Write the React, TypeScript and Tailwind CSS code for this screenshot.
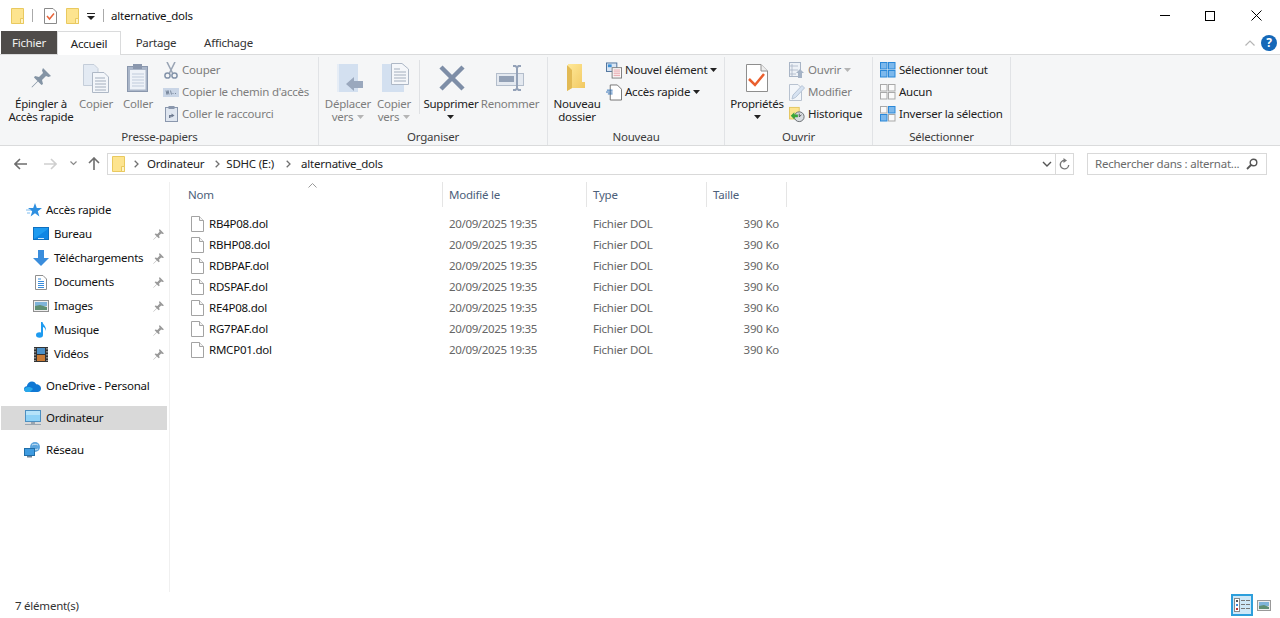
import React from "react";

const Folder = ({ className = "" }: { className?: string }) => (
  <svg width="13" height="16" viewBox="0 0 13 16" className={className}>
    <path d="M0.5 0.5H12.5V15.5H0.5Z" fill="#fde48f" stroke="#e9c95f" />
    <path d="M9.5 10.5H12.5V15.5H9.5Z" fill="#fff3c4" stroke="#e9c95f" />
  </svg>
);

const PropsSmall = () => (
  <svg width="13" height="16" viewBox="0 0 13 16">
    <path d="M0.5 0.5H9L12.5 4V15.5H0.5Z" fill="#fff" stroke="#8a8a8a" />
    <path d="M3 8L5.5 11L10 5.5" fill="none" stroke="#e8643a" strokeWidth="1.5" />
  </svg>
);

const Pin = ({ size = 12, fill = "#9a9a9a" }: { size?: number; fill?: string }) => (
  <svg width={size} height={size} viewBox="0 0 20 20">
    <path d="M12 0L20 8L17.5 9L15 8L11 12L12 16L10.5 17L7 13.5L1 19.5L0.5 19L6.5 13L3 9.5L4 8L8 9L12 5L11 2.5Z" fill={fill} />
  </svg>
);

const CopyIcon = () => (
  <svg width="26" height="29" viewBox="0 0 26 29">
    <path d="M0.5 0.5H11L15 4.5V21.5H0.5Z" fill="#e3eaf3" stroke="#c4cdd9" />
    <path d="M9.5 8.5H21L25.5 13V28.5H9.5Z" fill="#f3f6fa" stroke="#aeb8c6" />
    <path d="M12 14H22M12 17H23M12 20H23M12 23H23M12 26H23" stroke="#a3aebd" />
  </svg>
);

const PasteIcon = () => (
  <svg width="22" height="30" viewBox="0 0 22 30">
    <rect x="0.5" y="3.5" width="20" height="25" fill="#aab6c9" stroke="#8a97ad" />
    <rect x="3" y="7" width="15.5" height="19.5" fill="#eef2f8" />
    <path d="M5 11H17M5 14H17M5 17H17M5 20H17M5 23H17" stroke="#c0cbdb" />
    <rect x="6" y="1" width="9" height="5" fill="#8a97ad" />
  </svg>
);

const Scissors = () => (
  <svg width="14" height="17" viewBox="0 0 14 17">
    <path d="M3 0L8.5 11M11 0L5.5 11" stroke="#9aa5b5" strokeWidth="1.6" fill="none" />
    <circle cx="3.5" cy="13.5" r="2.6" fill="none" stroke="#8494aa" strokeWidth="1.5" />
    <circle cx="10.5" cy="13.5" r="2.6" fill="none" stroke="#8494aa" strokeWidth="1.5" />
  </svg>
);

const PathIcon = () => (
  <svg width="16" height="9" viewBox="0 0 16 9">
    <rect width="16" height="9" fill="#c9d5e6" />
    <path d="M3 2.5L4 6.5L5 2.5L6 6.5M7.5 2.5L8.5 6.5M9.5 5.5H10.5M12 5.5H13" stroke="#66758a" strokeWidth="0.8" fill="none" />
  </svg>
);

const ShortcutIcon = () => (
  <svg width="13" height="16" viewBox="0 0 13 16">
    <rect x="0.5" y="1.5" width="12" height="14" fill="#dfe6f0" stroke="#8a97ad" />
    <rect x="3.5" y="0" width="6" height="3" fill="#8a97ad" />
    <path d="M4 12V9H6.5V7.5L9.5 9.5L6.5 11.5V10.5H5.5V12Z" fill="#6d7a90" />
  </svg>
);

const MoveIcon = () => (
  <svg width="26" height="29" viewBox="0 0 26 29" className="ml-[3px]">
    <path d="M0 0H21V28H0Z" fill="#d3e0f0" />
    <path d="M0 0H2V28H0Z" fill="#e6edf6" />
    <path d="M9 20L17 13V17H26V24H17V27Z" fill="#9aa8bd" />
  </svg>
);

const CopyToIcon = () => (
  <svg width="27" height="30" viewBox="0 0 27 30" className="ml-[2px]">
    <path d="M0 1H22V29H0Z" fill="#d3e0f0" />
    <path d="M9.5 0.5H20L26.5 6V21.5H9.5Z" fill="#f5f7fa" stroke="#aeb8c6" />
    <path d="M12 6H18M12 9H24M12 12H24M12 15H24M12 18H24" stroke="#a3aebd" />
  </svg>
);

const DeleteIcon = () => (
  <svg width="26" height="26" viewBox="0 0 26 26" className="ml-[2px]">
    <path d="M2 2L24 24M24 2L2 24" stroke="#7e8ea7" strokeWidth="4.5" />
  </svg>
);

const RenameIcon = () => (
  <svg width="29" height="28" viewBox="0 0 29 28">
    <rect x="0.5" y="9.5" width="27" height="12" fill="#e4e9f0" stroke="#b3bdcb" />
    <rect x="3" y="12" width="15" height="6" fill="#93a1b6" />
    <path d="M17 2H19.5L21 3.5L22.5 2H25M21 3.5V24.5M17 26H19.5L21 24.5L22.5 26H25" stroke="#94a2b8" strokeWidth="2" fill="none" />
  </svg>
);

const NewFolderIcon = () => (
  <svg width="20" height="28" viewBox="0 0 20 28" className="mr-[2px]">
    <defs>
      <linearGradient id="nf" x1="0" y1="0" x2="1" y2="1">
        <stop offset="0" stopColor="#ffe999" />
        <stop offset="1" stopColor="#f0c65e" />
      </linearGradient>
    </defs>
    <path d="M2 0H16V18H19V24H6L1 27Z" fill="url(#nf)" />
    <path d="M1 1L6 6V24L1 27Z" fill="#e2ba55" />
  </svg>
);

const NewItemIcon = () => (
  <svg width="17" height="17" viewBox="0 0 17 17">
    <rect x="0.5" y="0.5" width="11" height="9" fill="#d9e6f4" stroke="#4a6f9a" />
    <rect x="2" y="2" width="4" height="3" fill="#3d8fd6" />
    <rect x="6.5" y="5.5" width="10" height="11" fill="#fff" stroke="#7a7a7a" />
    <path d="M8 8H15M8 10H15M8 12H15M8 14H15" stroke="#e29aa0" />
  </svg>
);

const QuickIcon = () => (
  <svg width="17" height="17" viewBox="0 0 17 17">
    <path d="M4.5 0.5H12L16.5 5V16.5H4.5Z" fill="#fff" stroke="#6f6f6f" />
    <path d="M1 6H7M0 8H7M2 10H7" stroke="#2c6db3" />
  </svg>
);

const PropsLarge = () => (
  <svg width="22" height="28" viewBox="0 0 22 28">
    <path d="M0.5 0.5H15L21.5 7V27.5H0.5Z" fill="#fff" stroke="#8e8e8e" />
    <path d="M15 0.5V7H21.5" fill="#eee" stroke="#8e8e8e" />
    <path d="M3 15L9 21L18 10" fill="none" stroke="#ea5f2e" strokeWidth="2.5" />
  </svg>
);

const OpenIcon = () => (
  <svg width="16" height="16" viewBox="0 0 16 16">
    <rect x="0.5" y="0.5" width="11" height="14" fill="#eef2f7" stroke="#a9b5c6" />
    <path d="M2 3H4V5H2ZM2 7H4V9H2ZM2 11H4V13H2ZM5 4H9M5 8H9M5 12H7" stroke="#a9b5c6" fill="none" strokeWidth="0.8" />
    <path d="M9 16V11H7L11 7L15 11H13V16Z" fill="#a5b3c6" />
  </svg>
);

const EditIcon = () => (
  <svg width="16" height="17" viewBox="0 0 16 17">
    <path d="M0.5 0.5H9L12.5 4V16.5H0.5Z" fill="#f3f6fa" stroke="#b8c2d0" />
    <path d="M3 15L4 11L13 1.5L15.5 4L6.5 13.5Z" fill="#d6e2f1" stroke="#b6c4d6" />
  </svg>
);

const HistoryIcon = () => (
  <svg width="18" height="17" viewBox="0 0 18 17">
    <rect x="0.5" y="0.5" width="11" height="13" fill="#fde48f" stroke="#e2c35a" />
    <circle cx="11.5" cy="11" r="5.5" fill="#d9dde2" stroke="#5f6468" />
    <path d="M11.5 7.5V11L14 9" stroke="#444" fill="none" />
    <path d="M2 10L6 6V8.5H10V11.5H6V14Z" fill="#3aa53a" />
  </svg>
);

const SelectGrid = ({ filled }: { filled: number[] }) => (
  <svg width="16" height="16" viewBox="0 0 16 16">
    {[0, 1, 2, 3].map((i) => {
      const x = i % 2 === 0 ? 0.5 : 8.5;
      const y = i < 2 ? 0.5 : 8.5;
      const on = filled.includes(i);
      return (
        <rect key={i} x={x} y={y} width="6.5" height="6.5" fill={on ? "#7cb8ec" : "#fafafa"} stroke={on ? "#2b88d8" : "#a9a9a9"} />
      );
    })}
  </svg>
);

const Caret = ({ color = "#222" }: { color?: string }) => (
  <svg width="7" height="4" viewBox="0 0 7 4" className="shrink-0">
    <path d="M0 0H7L3.5 4Z" fill={color} />
  </svg>
);

const FileIcon = () => (
  <svg width="13" height="16" viewBox="0 0 13 16">
    <path d="M0.5 0.5H8.5L12.5 4.5V15.5H0.5Z" fill="#fff" stroke="#a3a3a3" />
    <path d="M8.5 0.5V4.5H12.5" fill="#f3f3f3" stroke="#a3a3a3" />
  </svg>
);

const LargeBtn = ({
  icon,
  lines,
  className,
  disabled,
  caret,
}: {
  icon: React.ReactNode;
  lines: React.ReactNode[];
  className: string;
  disabled?: boolean;
  caret?: boolean;
}) => (
  <div className={`flex flex-col items-center ${className}`}>
    <div className="h-[38px] flex items-center justify-center shrink-0">{icon}</div>
    <div className={`flex flex-col items-center leading-[13px] whitespace-nowrap ${disabled ? "text-[#7d7d7d]" : "text-[#222]"}`}>
      {lines.map((l, i) => (
        <span key={i} className="h-[13px] flex items-center gap-[4px]">
          {l}
        </span>
      ))}
      {caret && (
        <span className="h-[13px] flex items-center">
          <Caret />
        </span>
      )}
    </div>
  </div>
);

const SmallBtn = ({
  icon,
  text,
  disabled,
  caret,
}: {
  icon: React.ReactNode;
  text: string;
  disabled?: boolean;
  caret?: string;
}) => (
  <div className="h-[22px] flex items-center">
    <div className="w-[16px] h-[17px] flex items-center justify-center shrink-0">{icon}</div>
    <span className={`ml-[3px] whitespace-nowrap ${disabled ? "text-[#7d7d7d]" : "text-[#222]"}`}>{text}</span>
    {caret && (
      <span className="ml-[3px] flex">
        <Caret color={caret} />
      </span>
    )}
  </div>
);

const Group = ({ className, label, children }: { className: string; label: string; children: React.ReactNode }) => (
  <div className={`flex flex-col shrink-0 h-full ${className}`}>
    <div className="flex h-[71px] mt-[4px]">{children}</div>
    <div className="flex-1 flex items-center justify-center text-[#3c3c3c]">{label}</div>
  </div>
);

const Sep = () => <div className="w-px bg-[#e1e3e6] h-[88px] mt-[2px] shrink-0" />;

const NavIcon = ({ kind }: { kind: string }) => {
  switch (kind) {
    case "star":
      return (
        <svg width="16" height="16" viewBox="0 0 16 16">
          <path d="M9 1L10.8 6H16L11.8 9.2L13.4 14.5L9 11.3L4.6 14.5L6.2 9.2L2 6H7.2Z" fill="#2e8fe0" />
          <path d="M0 8H5M1 11H4" stroke="#7dbcf0" />
        </svg>
      );
    case "desktop":
      return (
        <svg width="16" height="14" viewBox="0 0 16 14">
          <rect x="0.5" y="0.5" width="15" height="12" fill="#1e9bf0" stroke="#0e6fc0" />
          <path d="M1 12L15 2V12Z" fill="#0f86e4" />
          <rect x="5" y="11" width="6" height="1" fill="#cfe8fb" />
        </svg>
      );
    case "down":
      return (
        <svg width="16" height="16" viewBox="0 0 16 16">
          <path d="M5 0H11V8H16L8 16L0 8H5Z" fill="#3a8ddc" />
        </svg>
      );
    case "doc":
      return (
        <svg width="12" height="15" viewBox="0 0 12 15">
          <path d="M0.5 0.5H8L11.5 4V14.5H0.5Z" fill="#fff" stroke="#8f8f8f" />
          <path d="M3 4H6M3 6.5H9M3 8.5H9M3 10.5H9M3 12.5H9" stroke="#3a8ddc" />
        </svg>
      );
    case "image":
      return (
        <svg width="16" height="12" viewBox="0 0 16 12">
          <rect x="0.5" y="0.5" width="15" height="11" fill="#eee" stroke="#8f8f8f" />
          <rect x="2" y="2" width="12" height="4" fill="#7fb4d9" />
          <path d="M2 6L7 5L14 7V10H2Z" fill="#5f8f73" />
        </svg>
      );
    case "music":
      return (
        <svg width="11" height="16" viewBox="0 0 11 16">
          <ellipse cx="3.5" cy="13" rx="3.5" ry="2.8" fill="#1e9bf0" />
          <path d="M5 13V0H6.5C7 3 10.5 4 10 9C9 6 8 5 7 5V13Z" fill="#1e9bf0" />
        </svg>
      );
    case "video":
      return (
        <svg width="14" height="15" viewBox="0 0 14 15">
          <rect width="14" height="15" fill="#333" />
          <rect x="3" y="1" width="8" height="6" fill="#4b90c8" />
          <rect x="3" y="8" width="8" height="6" fill="#c97a34" />
          <path d="M1 1V14M13 1V14" stroke="#ddd" strokeDasharray="1.5 1.5" />
        </svg>
      );
    case "cloud":
      return (
        <svg width="17" height="11" viewBox="0 0 17 11">
          <path d="M3 11C1 11 0 9.5 0 8C0 6.5 1.3 5.3 2.8 5.3C3.4 2.5 5.5 0.5 8 0.5C10 0.5 11.5 1.7 12.2 3.3C14.8 3.3 17 5 17 7.5C17 9.5 15.5 11 13.5 11Z" fill="#0f78d4" />
          <path d="M3 11C1 11 0 9.5 0 8C2 6 6 5 9 8L6 11Z" fill="#28a8ea" />
        </svg>
      );
    case "pc":
      return (
        <svg width="16" height="16" viewBox="0 0 16 16">
          <rect x="0.5" y="0.5" width="15" height="11" fill="#8ed2f7" stroke="#4d8fc0" />
          <rect x="1" y="1" width="14" height="4" fill="#b5e3fa" />
          <rect x="6" y="12" width="4" height="2" fill="#9aa5b0" />
          <rect x="0" y="14" width="16" height="1" fill="#9aa5b0" />
        </svg>
      );
    default:
      return (
        <svg width="17" height="16" viewBox="0 0 17 16">
          <circle cx="11" cy="5" r="5" fill="#5da5dd" />
          <path d="M8 3C10 2 12 2 14 3M8 7C10 8 12 8 14 7" stroke="#cfe5f5" fill="none" />
          <rect x="0.5" y="6.5" width="10" height="7" fill="#3f9be0" stroke="#206ea8" />
          <rect x="3" y="14" width="5" height="1.5" fill="#6d8296" />
        </svg>
      );
  }
};

const quick = [
  ["desktop", "Bureau"],
  ["down", "Téléchargements"],
  ["doc", "Documents"],
  ["image", "Images"],
  ["music", "Musique"],
  ["video", "Vidéos"],
];

const files = ["RB4P08.dol", "RBHP08.dol", "RDBPAF.dol", "RDSPAF.dol", "RE4P08.dol", "RG7PAF.dol", "RMCP01.dol"];

const gridCols = "grid grid-cols-[262px_144px_120px_80px]";

const Chevron = () => (
  <svg width="5" height="8" viewBox="0 0 5 8" className="shrink-0">
    <path d="M0.7 0.7L4 4L0.7 7.3" fill="none" stroke="#707070" strokeWidth="1.3" />
  </svg>
);

export default function App() {
  return (
    <div
      className="w-[1280px] h-[618px] flex flex-col bg-white overflow-hidden text-[11.5px] text-[#1a1a1a] tracking-[-0.02em]"
      style={{ fontFamily: '"Noto Sans", sans-serif' }}
    >
      {/* Title bar */}
      <div className="h-[31px] flex items-center shrink-0 pl-[11px]">
        <Folder />
        <div className="w-px h-[13px] bg-[#aaa] ml-[8px]" />
        <span className="ml-[11px] flex"><PropsSmall /></span>
        <span className="ml-[9px] flex"><Folder /></span>
        <svg width="8" height="7" viewBox="0 0 8 7" className="ml-[8px] mt-[2px]">
          <path d="M0 0H8V1H0ZM0 3H8L4 7Z" fill="#222" />
        </svg>
        <div className="w-px h-[13px] bg-[#aaa] ml-[8px]" />
        <span className="ml-[7px] text-[#111]">alternative_dols</span>
        <div className="ml-auto flex items-center">
          <div className="w-[10px] h-px bg-black mr-[35px]" />
          <div className="w-[10px] h-[10px] border border-black mr-[36px]" />
          <svg width="11" height="11" viewBox="0 0 11 11" className="mr-[18px]">
            <path d="M0.5 0.5L10.5 10.5M10.5 0.5L0.5 10.5" stroke="#000" />
          </svg>
        </div>
      </div>

      {/* Tabs */}
      <div className="h-[24px] flex items-stretch shrink-0 pl-px border-b border-[#dadbdc]">
        <div className="w-[56px] h-[23px] bg-[#4f4c4a] text-[#f0f0f0] flex items-center justify-center">Fichier</div>
        <div className="w-[64px] h-[24px] bg-white border border-b-0 border-[#dadbdc] flex items-center justify-center text-[#222] relative z-10">Accueil</div>
        <div className="w-[70px] flex items-center justify-center text-[#333]">Partage</div>
        <div className="w-[75px] flex items-center justify-center text-[#333]">Affichage</div>
        <div className="ml-auto flex items-center mr-[3px]">
          <svg width="10" height="6" viewBox="0 0 10 6" className="mr-[6px]">
            <path d="M0.5 5.5L5 1L9.5 5.5" fill="none" stroke="#b5b5b5" strokeWidth="1.2" />
          </svg>
          <div className="w-[16px] h-[16px] rounded-full bg-[#1568b8] text-white flex items-center justify-center text-[12px] font-bold leading-none">?</div>
        </div>
      </div>

      {/* Ribbon */}
      <div className="h-[91px] bg-[#f5f6f7] border-b border-[#dadbdc] flex shrink-0 pl-px">
        <Group className="w-[317px]" label="Presse-papiers">
          <LargeBtn className="w-[80px]" icon={<Pin size={20} fill="#8494a5" />} lines={["Épingler à", "Accès rapide"]} />
          <LargeBtn className="w-[30px]" disabled icon={<CopyIcon />} lines={["Copier"]} />
          <LargeBtn className="w-[36px] ml-[9px]" disabled icon={<PasteIcon />} lines={["Coller"]} />
          <div className="ml-[7px] flex flex-col">
            <SmallBtn disabled icon={<Scissors />} text="Couper" />
            <SmallBtn disabled icon={<PathIcon />} text="Copier le chemin d'accès" />
            <SmallBtn disabled icon={<ShortcutIcon />} text="Coller le raccourci" />
          </div>
        </Group>
        <Sep />
        <Group className="w-[228px]" label="Organiser">
          <LargeBtn className="w-[50px] ml-[4px]" disabled icon={<MoveIcon />} lines={["Déplacer", <>vers <Caret color="#b5b5b5" /></>]} />
          <LargeBtn className="w-[42px]" disabled icon={<CopyToIcon />} lines={["Copier", <>vers <Caret color="#b5b5b5" /></>]} />
          <div className="ml-[4px] w-px h-[54px] mt-[1px] bg-[#dfe1e4]" />
          <LargeBtn className="w-[62px]" icon={<DeleteIcon />} lines={["Supprimer"]} caret />
          <LargeBtn className="w-[56px]" disabled icon={<RenameIcon />} lines={["Renommer"]} />
        </Group>
        <Sep />
        <Group className="w-[176px]" label="Nouveau">
          <LargeBtn className="w-[58px]" icon={<NewFolderIcon />} lines={["Nouveau", "dossier"]} />
          <div className="flex flex-col">
            <SmallBtn icon={<NewItemIcon />} text="Nouvel élément" caret="#222" />
            <SmallBtn icon={<QuickIcon />} text="Accès rapide" caret="#222" />
          </div>
        </Group>
        <Sep />
        <Group className="w-[147px]" label="Ouvrir">
          <LargeBtn className="w-[64px]" icon={<PropsLarge />} lines={["Propriétés"]} caret />
          <div className="flex flex-col">
            <SmallBtn disabled icon={<OpenIcon />} text="Ouvrir" caret="#b5b5b5" />
            <SmallBtn disabled icon={<EditIcon />} text="Modifier" />
            <SmallBtn icon={<HistoryIcon />} text="Historique" />
          </div>
        </Group>
        <Sep />
        <Group className="w-[137px]" label="Sélectionner">
          <div className="flex flex-col ml-[7px]">
            <SmallBtn icon={<SelectGrid filled={[0, 1, 2, 3]} />} text="Sélectionner tout" />
            <SmallBtn icon={<SelectGrid filled={[]} />} text="Aucun" />
            <SmallBtn icon={<SelectGrid filled={[1, 2]} />} text="Inverser la sélection" />
          </div>
        </Group>
        <Sep />
      </div>

      {/* Address bar */}
      <div className="h-[36px] flex items-center shrink-0 pl-[14px] pb-[1px]">
        <svg width="13" height="12" viewBox="0 0 13 12">
          <path d="M6 1L1 6L6 11M1 6H13" fill="none" stroke="#6e6e6e" strokeWidth="1.6" />
        </svg>
        <svg width="13" height="12" viewBox="0 0 13 12" className="ml-[17px]">
          <path d="M7 1L12 6L7 11M12 6H0" fill="none" stroke="#cfcfcf" strokeWidth="1.6" />
        </svg>
        <svg width="7" height="5" viewBox="0 0 7 5" className="ml-[13px]">
          <path d="M0.5 0.5L3.5 3.5L6.5 0.5" fill="none" stroke="#8a8a8a" strokeWidth="1.2" />
        </svg>
        <svg width="12" height="13" viewBox="0 0 12 13" className="ml-[11px]">
          <path d="M1 6L6 1L11 6M6 1V13" fill="none" stroke="#6e6e6e" strokeWidth="1.6" />
        </svg>
        <div className="ml-[7px] w-[967px] h-[22px] border border-[#d9d9d9] flex items-center pl-[4px]">
          <Folder />
          <span className="ml-[9px]"><Chevron /></span>
          <span className="ml-[8px] text-[#222]">Ordinateur</span>
          <span className="ml-[11px]"><Chevron /></span>
          <span className="ml-[6px] text-[#222]">SDHC (E:)</span>
          <span className="ml-[12px]"><Chevron /></span>
          <span className="ml-[10px] text-[#222]">alternative_dols</span>
          <div className="ml-auto flex items-center h-full">
            <svg width="10" height="6" viewBox="0 0 10 6" className="mr-[2px]">
              <path d="M1 1L5 5L9 1" fill="none" stroke="#555" strokeWidth="1.4" />
            </svg>
            <div className="w-px h-full bg-[#d9d9d9] ml-[1px]" />
            <div className="w-[17px] flex justify-center">
              <svg width="11" height="12" viewBox="0 0 11 12">
                <path d="M5.5 2.5A4.2 4.2 0 1 0 9.7 7" fill="none" stroke="#777" strokeWidth="1.4" />
                <path d="M4.5 0L8 2.5L4.5 5Z" fill="#777" />
              </svg>
            </div>
          </div>
        </div>
        <div className="ml-[13px] w-[180px] h-[22px] border border-[#d9d9d9] flex items-center pl-[7px] text-[#6a6a6a]">
          <span className="whitespace-nowrap">Rechercher dans : alternat...</span>
          <svg width="12" height="12" viewBox="0 0 12 12" className="ml-auto mr-[8px]">
            <circle cx="7.5" cy="4.5" r="3.3" fill="none" stroke="#555" strokeWidth="1.4" />
            <path d="M5 7L1 11" stroke="#555" strokeWidth="1.8" />
          </svg>
        </div>
      </div>

      {/* Main */}
      <div className="flex-1 flex min-h-0">
        <div className="w-[170px] shrink-0 border-r border-[#f0f0f0] pt-[16px] pl-px">
          <div className="h-[24px] flex items-center pl-[25px] text-[#111]">
            <span className="w-[16px] flex justify-center"><NavIcon kind="star" /></span>
            <span className="ml-[4px]">Accès rapide</span>
          </div>
          {quick.map(([k, t]) => (
            <div key={t} className="h-[24px] flex items-center pl-[32px] pr-[3px] text-[#111]">
              <span className="w-[16px] h-[16px] flex items-center justify-center"><NavIcon kind={k} /></span>
              <span className="ml-[5px]">{t}</span>
              <span className="ml-auto flex mr-[2px]"><Pin size={11} /></span>
            </div>
          ))}
          <div className="h-[24px] mt-[8px] flex items-center pl-[23px] text-[#111]">
            <span className="w-[17px] flex justify-center"><NavIcon kind="cloud" /></span>
            <span className="ml-[5px]">OneDrive - Personal</span>
          </div>
          <div className="h-[24px] mt-[8px] w-[166px] bg-[#d9d9d9] flex items-center pl-[23px] text-[#111]">
            <span className="w-[17px] flex justify-center"><NavIcon kind="pc" /></span>
            <span className="ml-[5px]">Ordinateur</span>
          </div>
          <div className="h-[24px] mt-[8px] flex items-center pl-[23px] text-[#111]">
            <span className="w-[17px] flex justify-center"><NavIcon kind="net" /></span>
            <span className="ml-[5px]">Réseau</span>
          </div>
        </div>
        <div className="flex-1 pl-[11px] relative">
          <svg width="9" height="5" viewBox="0 0 9 5" className="absolute left-[138px] top-[1px]">
            <path d="M0.5 4.5L4.5 0.5L8.5 4.5" fill="none" stroke="#9a9a9a" />
          </svg>
          <div className={`${gridCols} h-[25px] text-[#4c607a]`}>
            <div className="border-r border-[#e5e5e5] pl-[7px] flex items-center">Nom</div>
            <div className="border-r border-[#e5e5e5] pl-[6px] flex items-center">Modifié le</div>
            <div className="border-r border-[#e5e5e5] pl-[6px] flex items-center">Type</div>
            <div className="border-r border-[#e5e5e5] pl-[6px] flex items-center">Taille</div>
          </div>
          <div className="pt-[6px]">
            {files.map((f) => (
              <div key={f} className={`${gridCols} h-[21px] items-center text-[#666]`}>
                <div className="flex items-center pl-[10px] text-[#111]">
                  <FileIcon />
                  <span className="ml-[5px]">{f}</span>
                </div>
                <div className="pl-[6px] tracking-[-0.03em]">20/09/2025 19:35</div>
                <div className="pl-[6px]">Fichier DOL</div>
                <div className="text-right pr-[8px]">390 Ko</div>
              </div>
            ))}
          </div>
        </div>
      </div>

      {/* Status bar */}
      <div className="h-[26px] shrink-0 flex items-center pl-[15px] text-[#333]">
        <span className="mt-[1px]">7 élément(s)</span>
        <div className="ml-auto flex items-center mr-[1px]">
          <div className="w-[22px] h-[22px] border-2 border-[#2d9fdc] bg-[#cfe8f7] flex items-center justify-center">
            <svg width="16" height="14" viewBox="0 0 16 14">
              <rect x="0.5" y="0.5" width="5" height="13" fill="#fff" stroke="#8a8a8a" />
              <rect x="2" y="2" width="2" height="2" fill="#555" />
              <rect x="2" y="6" width="2" height="2" fill="#3a8ddc" />
              <rect x="2" y="10" width="2" height="2" fill="#b33" />
              <path d="M7 2.5H11M12 2.5H16M7 6.5H11M12 6.5H16M7 10.5H11M12 10.5H16" stroke="#777" />
            </svg>
          </div>
          <svg width="14" height="11" viewBox="0 0 14 11" className="ml-[4px] mr-[8px]">
            <rect x="0.5" y="0.5" width="13" height="10" fill="#eee" stroke="#999" />
            <rect x="2" y="2" width="10" height="4" fill="#7fb4d9" />
            <path d="M2 6L7 5L12 7V9H2Z" fill="#5f8f73" />
          </svg>
        </div>
      </div>
    </div>
  );
}
